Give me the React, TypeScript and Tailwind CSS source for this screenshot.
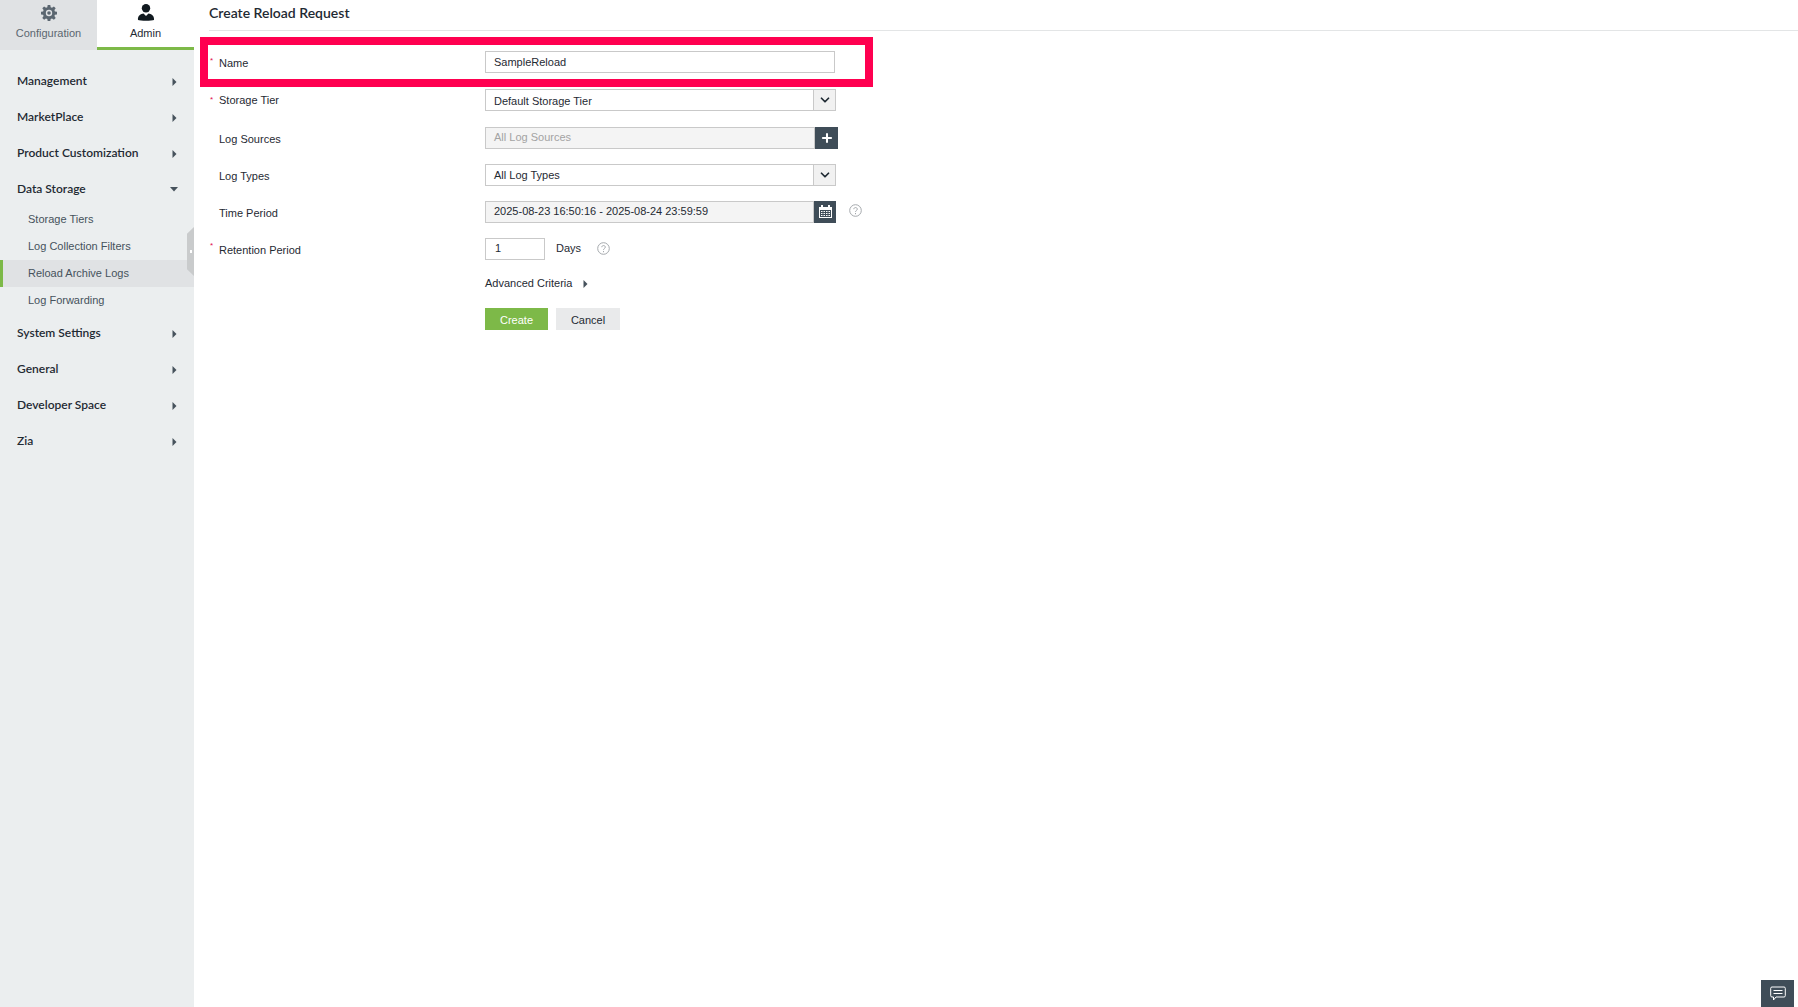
import React from 'react';
import { ChevronDown, Plus } from 'lucide-react';

const LATO = 'font-["Lato",sans-serif]';

const Caret = ({ open = false }: { open?: boolean }) =>
  open ? (
    <svg width="8" height="5" viewBox="0 0 8 5">
      <path d="M0 0h8L4 4.500z" fill="#46525c" />
    </svg>
  ) : (
    <svg width="5" height="8" viewBox="0 0 5 8" className="mr-px mt-[2px]">
      <path d="M0.500 0L4.500 4L0.500 8z" fill="#46525c" />
    </svg>
  );

const NavHead = ({ label, open }: { label: string; open?: boolean }) => (
  <div className="flex h-9 items-center justify-between pl-[17px] pr-4">
    <span className={`${LATO} text-[12px] font-semibold text-[#1f2a33]`}>{label}</span>
    <Caret open={open} />
  </div>
);

const SubItem = ({ label, active }: { label: string; active?: boolean }) => (
  <div
    className={`flex h-[27px] items-center pl-[28px] text-[11px] text-[#46525c] ${
      active ? 'border-l-[3px] border-[#7db948] bg-[#e0e2e4] !pl-[25px]' : ''
    }`}
  >
    {label}
  </div>
);

const Help = () => (
  <svg width="13" height="13" viewBox="0 0 13 13" className="shrink-0">
    <circle cx="6.500" cy="6.500" r="5.800" fill="none" stroke="#a5a9ad" strokeWidth="1" />
    <path d="M4.800 5.200c0-2.200 3.500-2.200 3.500 0 0 1.300-1.800 1.300-1.800 2.700" fill="none" stroke="#a5a9ad" strokeWidth="1" />
    <rect x="6" y="9" width="1" height="1.200" fill="#a5a9ad" />
  </svg>
);

const Row = ({
  label,
  required,
  height,
  labelPad = 'pt-[2px]',
  children,
}: {
  label?: string;
  required?: boolean;
  height: string;
  labelPad?: string;
  children: React.ReactNode;
}) => (
  <div className={`flex items-center ${height}`}>
    <div className={`relative w-[276px] pl-[10px] text-[11px] text-[#1f2a33] ${labelPad}`}>
      {required && <span className="absolute left-[1px] top-[2px] text-[8px] text-[#e0104f]">*</span>}
      {label}
    </div>
    {children}
  </div>
);

const SelectBox = ({ value }: { value: string }) => (
  <div className="flex h-[22px] w-[351px] items-center border border-[#c9c9c9] bg-white">
    <span className="flex-1 pl-2 pt-[2px] text-[11px] text-[#1f2a33]">{value}</span>
    <span className="flex h-full w-[22px] items-center justify-center border-l border-[#c9c9c9] bg-[#f1f1f1]">
      <ChevronDown size={14} strokeWidth={3} color="#1f2a33" />
    </span>
  </div>
);

export default function App() {
  return (
    <div className="relative flex h-[1007px] w-[1798px] overflow-hidden bg-white font-['Liberation_Sans',sans-serif]">
      {/* sidebar */}
      <aside className="relative w-[194px] shrink-0 bg-[#ebeeef]">
        <div className="flex h-[50px]">
          <div className="flex w-[97px] flex-col items-center bg-[#e0e2e4] pt-[5px] text-[11px] text-[#5b6670]">
            <svg width="16" height="16" viewBox="0 0 16 16">
              <path
                d="M6.700 0h2.600l.4 2.200 1.300.6L12.900 1.500l1.800 1.800-1.300 1.800.5 1.300 2.100.4v2.600l-2.100.4-.5 1.300 1.300 1.800-1.800 1.800-1.900-1.300-1.300.5-.4 2.100H6.700l-.4-2.100-1.300-.5-1.900 1.300-1.800-1.800 1.300-1.800-.5-1.300L0 9.400V6.800l2.100-.4.5-1.300-1.300-1.800 1.800-1.800L5 2.800l1.300-.6z"
                fill="#5b6670"
              />
              <circle cx="8" cy="8" r="3.200" fill="#e0e2e4" />
              <circle cx="8" cy="8" r="1.800" fill="#5b6670" />
            </svg>
            <span className="mt-[4px]">Configuration</span>
          </div>
          <div className="flex w-[97px] flex-col items-center border-b-[3px] border-[#7db948] bg-white pt-[4px] text-[11px] text-[#1f2a33]">
            <svg width="18" height="17" viewBox="0 0 18 17">
              <circle cx="9" cy="4.200" r="4.200" fill="#111a20" />
              <path d="M1 16c-.6-4.500 3-6 5.500-6.500L9 12l2.500-2.500c2.500.5 6.100 2 5.500 6.500 -2 1-14 1-16 0z" fill="#111a20" />
            </svg>
            <span className="mt-[4px]">Admin</span>
          </div>
        </div>
        <nav className="pt-[13px]">
          <NavHead label="Management" />
          <NavHead label="MarketPlace" />
          <NavHead label="Product Customization" />
          <NavHead label="Data Storage" open />
          <div className="-mt-px pb-px">
            <SubItem label="Storage Tiers" />
            <SubItem label="Log Collection Filters" />
            <SubItem label="Reload Archive Logs" active />
            <SubItem label="Log Forwarding" />
          </div>
          <NavHead label="System Settings" />
          <NavHead label="General" />
          <NavHead label="Developer Space" />
          <NavHead label="Zia" />
        </nav>
        {/* collapse grip */}
        <div className="absolute right-0 top-[227px] flex h-[49px] w-[7px] items-center justify-center bg-[#c9cbcc] [clip-path:polygon(100%_0,100%_100%,0_86%,0_14%)]">
          <span className="h-[3px] w-[2px] bg-white" />
        </div>
      </aside>

      {/* main */}
      <main className="relative flex-1 pl-[15px]">
        <div className={`${LATO} flex h-[31px] items-center border-b border-[#e3e5e6] pb-[6px] text-[14px] font-semibold text-[#1f2a33]`}>
          Create Reload Request
        </div>
        <div className="pt-[12px]">
          <Row label="Name" required height="h-[38px]">
            <div className="flex h-[22px] w-[350px] items-center border border-[#c9c9c9] pl-2 text-[11px] text-[#1f2a33]">
              SampleReload
            </div>
          </Row>
          <Row label="Storage Tier" required height="h-[38px]" labelPad="pt-0">
            <SelectBox value="Default Storage Tier" />
          </Row>
          <Row label="Log Sources" height="h-[37px]" labelPad="pt-[4px]">
            <div className="flex h-[22px] w-[353px]">
              <div className="flex flex-1 items-center border border-[#c9c9c9] bg-[#f4f4f4] pl-2 text-[11px] text-[#a3a3a3]">
                All Log Sources
              </div>
              <span className="flex w-[23px] items-center justify-center bg-[#3f4d58]">
                <Plus size={14} strokeWidth={3.5} color="#fff" />
              </span>
            </div>
          </Row>
          <Row label="Log Types" height="h-[37px]" labelPad="pt-[3px]">
            <SelectBox value="All Log Types" />
          </Row>
          <Row label="Time Period" height="h-[37px]" labelPad="pt-[3px]">
            <div className="flex h-[22px] w-[351px]">
              <div className="flex flex-1 items-center border border-[#c9c9c9] bg-[#f4f4f4] pl-2 text-[11px] text-[#1f2a33]">
                2025-08-23 16:50:16 - 2025-08-24 23:59:59
              </div>
              <span className="flex w-[22px] items-center justify-center bg-[#3f4d58]">
                <svg width="15" height="15" viewBox="0 0 15 15">
                  <path d="M1 3h13v11H1z" fill="#fff" />
                  <path d="M3 1h2v3H3zM10 1h2v3h-2z" fill="#fff" />
                  <path d="M2 6h11v7H2z" fill="#3f4d58" />
                  <path
                    d="M3 7h1.500v1H3zM5.500 7H7v1H5.500zM8 7h1.500v1H8zM10.500 7H12v1h-1.500zM3 9h1.500v1H3zM5.500 9H7v1H5.500zM8 9h1.500v1H8zM10.500 9H12v1h-1.500zM3 11h1.500v1H3zM5.500 11H7v1H5.500zM8 11h1.500v1H8zM10.500 11H12v1h-1.500z"
                    fill="#fff"
                  />
                </svg>
              </span>
            </div>
            <span className="ml-[13px] -mt-[2px]">
              <Help />
            </span>
          </Row>
          <Row label="Retention Period" required height="h-[37px]" labelPad="pt-[4px]">
            <div className="flex h-[22px] w-[60px] items-center border border-[#c9c9c9] pl-[9px] text-[11px] text-[#1f2a33]">
              1
            </div>
            <span className="ml-[11px] -mt-[1px] text-[11px] text-[#1f2a33]">Days</span>
            <span className="ml-[16px]">
              <Help />
            </span>
          </Row>
          <Row height="h-[31px]">
            <div className="flex items-center pt-[2px] text-[11px] text-[#1f2a33]">
              Advanced Criteria
              <svg width="5" height="8" viewBox="0 0 5 8" className="ml-[11px] mt-[1px]">
                <path d="M0.500 0L4.500 4L0.500 8z" fill="#46525c" />
              </svg>
            </div>
          </Row>
          <Row height="h-[41px]">
            <div className="flex gap-2 text-[11px]">
              <button className="h-[22px] w-[63px] bg-[#7db948] pt-[3px] text-white">Create</button>
              <button className="h-[22px] w-[64px] bg-[#e9eaeb] pt-[3px] text-[#1f2a33]">Cancel</button>
            </div>
          </Row>
        </div>

        {/* annotation box */}
        <div className="absolute left-[6px] top-[37px] h-[50px] w-[673px] border-[8px] border-[#ff0050]" />

        {/* feedback button */}
        <div className="absolute bottom-0 right-[4px] flex h-[27px] w-[33px] items-center justify-center bg-[#3f4d58]">
          <svg width="16" height="15" viewBox="0 0 16 15">
            <path
              d="M2 1h12a1.300 1.300 0 0 1 1.300 1.300v7.400A1.300 1.300 0 0 1 14 11H6l-2.500 3v-3H2A1.300 1.300 0 0 1 .7 9.700V2.300A1.300 1.300 0 0 1 2 1z"
              fill="none"
              stroke="#fff"
              strokeWidth="1"
            />
            <path d="M3.500 4.500h9M3.500 7.500h9" stroke="#fff" strokeWidth="1" />
          </svg>
        </div>
      </main>
    </div>
  );
}
